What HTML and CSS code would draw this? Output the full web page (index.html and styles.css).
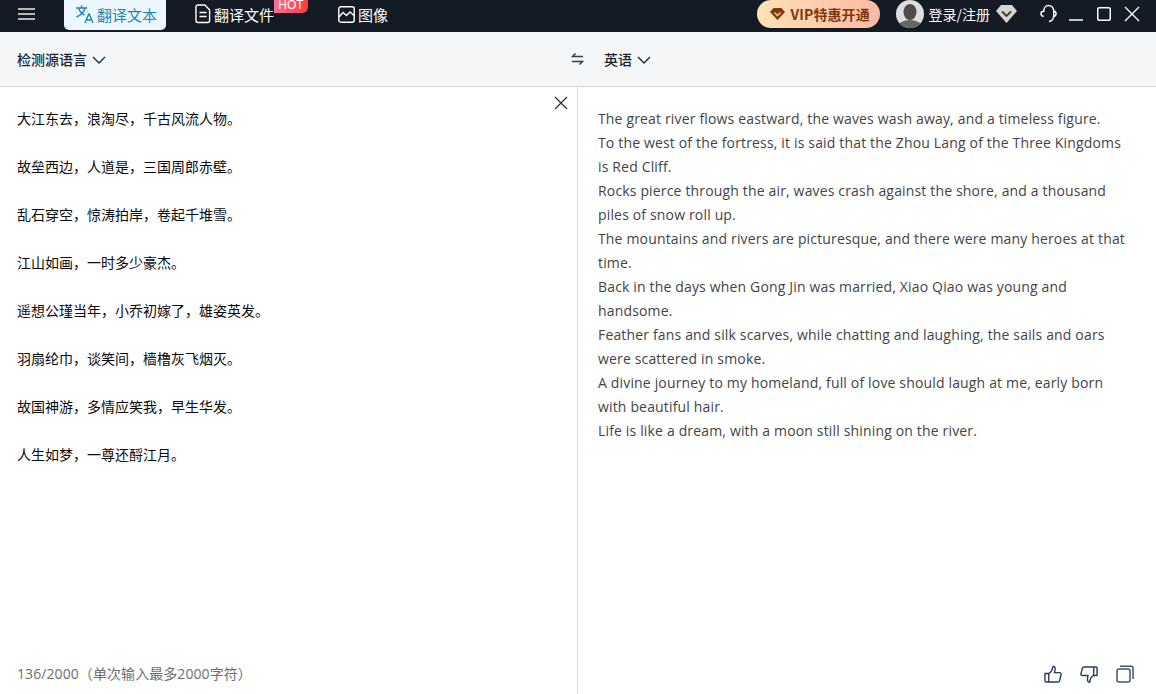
FILE: index.html
```html
<!DOCTYPE html>
<html lang="zh-CN">
<head>
<meta charset="utf-8">
<title>翻译</title>
<link rel="stylesheet" href="styles.css">
</head>
<body>
<div class="app">
  <header class="topbar">
    <svg class="menu-icon" width="20" height="14" viewBox="0 0 20 14"><path d="M1 2h17M1 7h17M1 12h17" stroke="#b4b6ba" stroke-width="2" fill="none"/></svg>
    <div class="tab tab-active">
      <svg width="20" height="20" viewBox="0 0 20 20" fill="none" stroke="#1f86b4" stroke-width="1.4"><path d="M1 4h11M6.500 1.500V4M10 4c-1 4-4 7-8.500 9M3.500 4c1 3 3 5.500 6 7"/><path d="M10 19l3.800-9h.4l3.800 9M11.300 16h5.400"/></svg>
      <span>翻译文本</span>
    </div>
    <div class="tab tab-file">
      <svg width="16" height="20" viewBox="0 0 16 20" fill="none" stroke="#fff" stroke-width="1.500"><path d="M2.500 1h7.500l5 5v10.500a2 2 0 0 1-2 2H2.500a2 2 0 0 1-2-2v-13.500a2 2 0 0 1 2-2z" transform="translate(.5 0) scale(.94 1)"/><path d="M4.500 8.500h7M4.500 12.500h7"/></svg>
      <span>翻译文件</span>
      <b class="hot">HOT</b>
    </div>
    <div class="tab tab-image">
      <svg width="17" height="17" viewBox="0 0 17 17" fill="none" stroke="#fff" stroke-width="1.400"><rect x=".8" y=".8" width="15.400" height="15.400" rx="2"/><path d="M1 11l4-4.500 3.500 3 3.500-3.500 4.500 4"/></svg>
      <span>图像</span>
    </div>
    <div class="spacer"></div>
    <div class="vip">
      <svg width="15" height="12" viewBox="0 0 15 12"><path d="M3.500 0h8L15 4l-7.500 8L0 4z" fill="#80380c"/><path d="M4.500 4.500l3 3 3-3" stroke="#f6cfa0" stroke-width="1.400" fill="none"/></svg>
      <span>VIP特惠开通</span>
    </div>
    <svg class="avatar" width="28" height="28" viewBox="0 0 28 28"><defs><clipPath id="av"><circle cx="14" cy="14" r="14"/></clipPath></defs><circle cx="14" cy="14" r="14" fill="#dedede"/><g clip-path="url(#av)"><ellipse cx="14" cy="12" rx="6.500" ry="8" fill="#4d4d4d"/><ellipse cx="14" cy="27" rx="12" ry="7" fill="#666"/></g></svg>
    <span class="login">登录/注册</span>
    <svg class="gem" width="21" height="18" viewBox="0 0 21 18"><path d="M5 0h11l5 6-10.500 12L0 6z" fill="#d8d4ce"/><path d="M6 6.500l4.500 4.500 4.500-4.500" stroke="#3c3c3c" stroke-width="1.800" fill="none"/></svg>
    <svg class="headset" width="17" height="20" viewBox="0 0 18 20" fill="none" stroke="#fff" stroke-width="1.500"><path d="M4 12.500C2 12.500 1 11 1 9.500S2 7 4 7c0-3.500 2-6 5-6s5.500 2.500 5.500 6v5c0 3-1.500 5-5 6"/><path d="M14.500 7c1.500 0 2.500 1 2.500 2.500s-1 3-2.500 3"/></svg>
    <svg class="win win-min" width="14" height="14" viewBox="0 0 14 14"><path d="M0 13h14" stroke="#fff" stroke-width="1.500"/></svg>
    <svg class="win win-max" width="14" height="14" viewBox="0 0 14 14"><rect x=".75" y=".75" width="12.500" height="12.500" rx="1.500" fill="none" stroke="#fff" stroke-width="1.500"/></svg>
    <svg class="win win-close" width="16" height="16" viewBox="0 0 16 16"><path d="M1 1l14 14M15 1L1 15" stroke="#fff" stroke-width="1.400"/></svg>
  </header>

  <div class="langbar">
    <div class="lang-left">
      <span>检测源语言</span>
      <svg class="chev" width="14" height="8" viewBox="0 0 14 8"><path d="M1 1l6 6 6-6" stroke="#1c2a3a" stroke-width="1.400" fill="none"/></svg>
    </div>
    <div class="lang-right">
      <svg class="swap" width="13" height="12" viewBox="0 0 13 12" fill="none" stroke="#2c4055" stroke-width="1.500"><path d="M12 3.500H1.500L4.500 .5M1 8.500h10.500l-3 3"/></svg>
      <span>英语</span>
      <svg class="chev" width="14" height="8" viewBox="0 0 14 8"><path d="M1 1l6 6 6-6" stroke="#1c2a3a" stroke-width="1.400" fill="none"/></svg>
    </div>
  </div>

  <main class="panes">
    <section class="pane-src">
      <svg class="clear" width="14" height="14" viewBox="0 0 14 14"><path d="M1 1l12 12M13 1L1 13" stroke="#333" stroke-width="1.300"/></svg>
      <div class="src-text">
        <p>大江东去，浪淘尽，千古风流人物。</p>
        <p>故垒西边，人道是，三国周郎赤壁。</p>
        <p>乱石穿空，惊涛拍岸，卷起千堆雪。</p>
        <p>江山如画，一时多少豪杰。</p>
        <p>遥想公瑾当年，小乔初嫁了，雄姿英发。</p>
        <p>羽扇纶巾，谈笑间，樯橹灰飞烟灭。</p>
        <p>故国神游，多情应笑我，早生华发。</p>
        <p>人生如梦，一尊还酹江月。</p>
      </div>
      <div class="count">136/2000（单次输入最多2000字符）</div>
    </section>
    <section class="pane-out">
      <div class="out-text">
        <p>The great river flows eastward, the waves wash away, and a timeless figure.</p>
        <p>To the west of the fortress, it is said that the Zhou Lang of the Three Kingdoms is Red Cliff.</p>
        <p>Rocks pierce through the air, waves crash against the shore, and a thousand piles of snow roll up.</p>
        <p>The mountains and rivers are picturesque, and there were many heroes at that time.</p>
        <p>Back in the days when Gong Jin was married, Xiao Qiao was young and handsome.</p>
        <p>Feather fans and silk scarves, while chatting and laughing, the sails and oars were scattered in smoke.</p>
        <p>A divine journey to my homeland, full of love should laugh at me, early born with beautiful hair.</p>
        <p>Life is like a dream, with a moon still shining on the river.</p>
      </div>
      <div class="actions">
        <svg width="18" height="19" viewBox="0 0 19 19" fill="none" stroke="#24405f" stroke-width="1.500" stroke-linejoin="round"><path d="M1 8.500h4V17.500H2.500a1.500 1.500 0 0 1-1.500-1.500zM5 8.500c2.500-1.500 4-4 4.500-7.500 2-.5 3 1.500 1.500 6.500h5.500c1 0 1.800.8 1.500 2l-1.500 6.500c-.2 1-.9 1.500-2 1.500H5"/></svg>
        <svg width="18" height="19" viewBox="0 0 19 19" fill="none" stroke="#24405f" stroke-width="1.500" stroke-linejoin="round"><path d="M18 10.500h-3.500V1.500H17a1 1 0 0 1 1 1zM14.500 10.500c-2 1-4 3-4 7-2 .5-3.500-1.500-2-7H2.500c-1 0-1.800-.8-1.500-2L2.500 3c.2-1 1-1.500 2-1.500h10"/></svg>
        <svg width="18" height="18" viewBox="0 0 18 18" fill="none" stroke="#3c5673" stroke-width="1.500" stroke-linejoin="round"><rect x="1" y="4" width="13" height="13" rx="2"/><path d="M4 1.200h11.500a1.500 1.500 0 0 1 1.500 1.500V14"/></svg>
      </div>
    </section>
  </main>
</div>
</body>
</html>
```
FILE: styles.css
```css
* { box-sizing: border-box; }
html, body { margin: 0; height: 100%; overflow: hidden; background: #fff; }
body { font-family: "Open Sans", "Noto Sans CJK SC", sans-serif; }
.app { height: 694px; display: flex; flex-direction: column; }

.topbar { height: 32px; flex: none; padding-bottom: 4px; background: #141b24; display: flex; align-items: center; color: #fff; font-size: 15px; font-family: "Noto Sans CJK SC", sans-serif; }
.menu-icon { margin-left: 17px; flex: none; }
.tab { display: flex; align-items: center; position: relative; white-space: nowrap; height: 28px; }
.tab svg { flex: none; }
.tab-active { align-self: flex-start; margin-left: 27px; width: 102px; height: 30px; padding: 0 0 2px 11px; gap: 2px; background: #ecf7fd; border-radius: 0 0 5px 5px; color: #1f86b4; }
.tab-file { margin-left: 29px; gap: 3px; }
.hot { position: absolute; left: 79px; top: 0; width: 34px; height: 13px; border-radius: 0 0 6px 0; background: linear-gradient(90deg, #ff6f91, #ff3b3b); font-weight: 400; font-size: 12px; line-height: 11px; text-align: center; font-family: "Liberation Sans", sans-serif; }
.tab-image { margin-left: 64px; gap: 3px; }
.spacer { flex: 1; }
.vip { width: 123px; height: 28px; border-radius: 14px; background: linear-gradient(90deg, #fde3b6, #fdb9a6); color: #80380c; display: flex; align-items: center; gap: 6px; padding-left: 13px; font-weight: 700; font-size: 14px; letter-spacing: .1px; white-space: nowrap; }
.avatar { margin-left: 16px; flex: none; }
.login { margin-left: 5px; font-size: 14px; white-space: nowrap; }
.gem { margin-left: 6px; flex: none; }
.headset { margin-left: 23px; flex: none; }
.win { flex: none; }
.win-min { margin-left: 12px; }
.win-max { margin-left: 14px; }
.win-close { margin-left: 13px; margin-right: 16px; }

.langbar { height: 55px; flex: none; background: #f5f6f8; border-bottom: 1px solid #d9d9d9; display: flex; align-items: center; font-size: 14px; font-weight: 500; color: #1a2633; font-family: "Noto Sans CJK SC", sans-serif; }
.lang-left { width: 571px; padding-left: 17px; display: flex; align-items: center; gap: 5px; }
.lang-right { display: flex; align-items: center; }
.swap { margin-right: 20px; }
.chev { margin-top: 2px; }
.lang-right .chev { margin-left: 5px; }

.panes { flex: 1; display: flex; min-height: 0; }
.pane-src { width: 578px; flex: none; border-right: 1px solid #d9d9d9; position: relative; display: flex; flex-direction: column; padding: 19px 17px 8px; }
.clear { position: absolute; left: 554px; top: 9px; }
.src-text { flex: 1; font-family: "Noto Sans CJK SC", sans-serif; font-size: 14px; line-height: 24px; color: #0a0a0a; }
.src-text p { margin: 0 0 24px; }
.count { font-size: 14px; line-height: 24px; color: #6e6e6e; letter-spacing: .08px; }
.pane-out { flex: 1; min-width: 0; display: flex; flex-direction: column; padding: 20px 20px 8px; }
.out-text { flex: 1; padding-right: 5px; font-size: 14px; line-height: 24px; color: #444; letter-spacing: .16px; }
.out-text p { margin: 0; }
.actions { display: flex; justify-content: flex-end; align-items: center; gap: 18px; height: 24px; padding-right: 2px; }
```
